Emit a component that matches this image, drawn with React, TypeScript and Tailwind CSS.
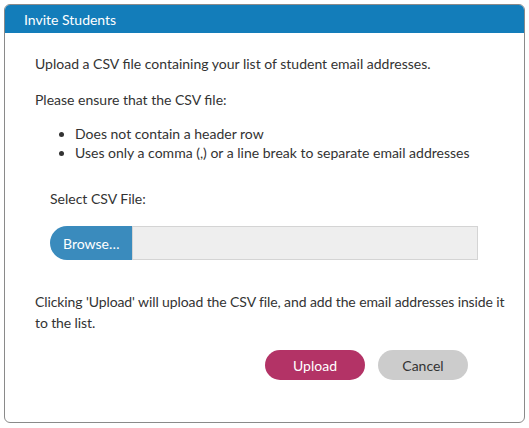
export default function App() {
  return (
    <div className="w-[529px] h-[428px] bg-white p-[4px] font-['Lato',sans-serif] text-[14px] text-[#333333]">
      <div className="h-[419px] w-[521px] rounded-[6px] border border-[#8a8a8a] overflow-hidden flex flex-col">
        <div className="h-[28px] bg-[#137dba] text-white pl-[19px] flex items-center text-[14px]">
          Invite Students
        </div>
        <div className="pl-[30px] pr-[10px] pt-[21px]">
          <p className="leading-[20px]">Upload a CSV file containing your list of student email addresses.</p>
          <p className="leading-[20px] mt-[16px]">Please ensure that the CSV file:</p>
          <ul className="mt-[14px] pl-[40px] list-disc leading-[19px]">
            <li>Does not contain a header row</li>
            <li>Uses only a comma (,) or a line break to separate email addresses</li>
          </ul>
          <div className="pl-[15px] mt-[27px]">
            <div className="leading-[20px]">Select CSV File:</div>
            <div className="mt-[17px] flex h-[34px] w-[428px]">
              <button className="w-[82px] bg-[#3a8bbd] text-white rounded-l-full text-left pl-[13px]">
                Browse…
              </button>
              <div className="flex-1 bg-[#eeeeee] border border-[#d4d4d4]" />
            </div>
          </div>
          <p className="leading-[21px] mt-[31px] tracking-[-0.1px]">
            Clicking 'Upload' will upload the CSV file, and add the email addresses inside it to the list.
          </p>
          <div className="flex justify-end gap-[13px] mt-[17px] pr-[46px]">
            <button className="w-[100px] h-[30px] rounded-full bg-[#b33366] text-white">Upload</button>
            <button className="w-[90px] h-[30px] rounded-full bg-[#cccccc] text-[#333333]">Cancel</button>
          </div>
        </div>
      </div>
    </div>
  );
}
